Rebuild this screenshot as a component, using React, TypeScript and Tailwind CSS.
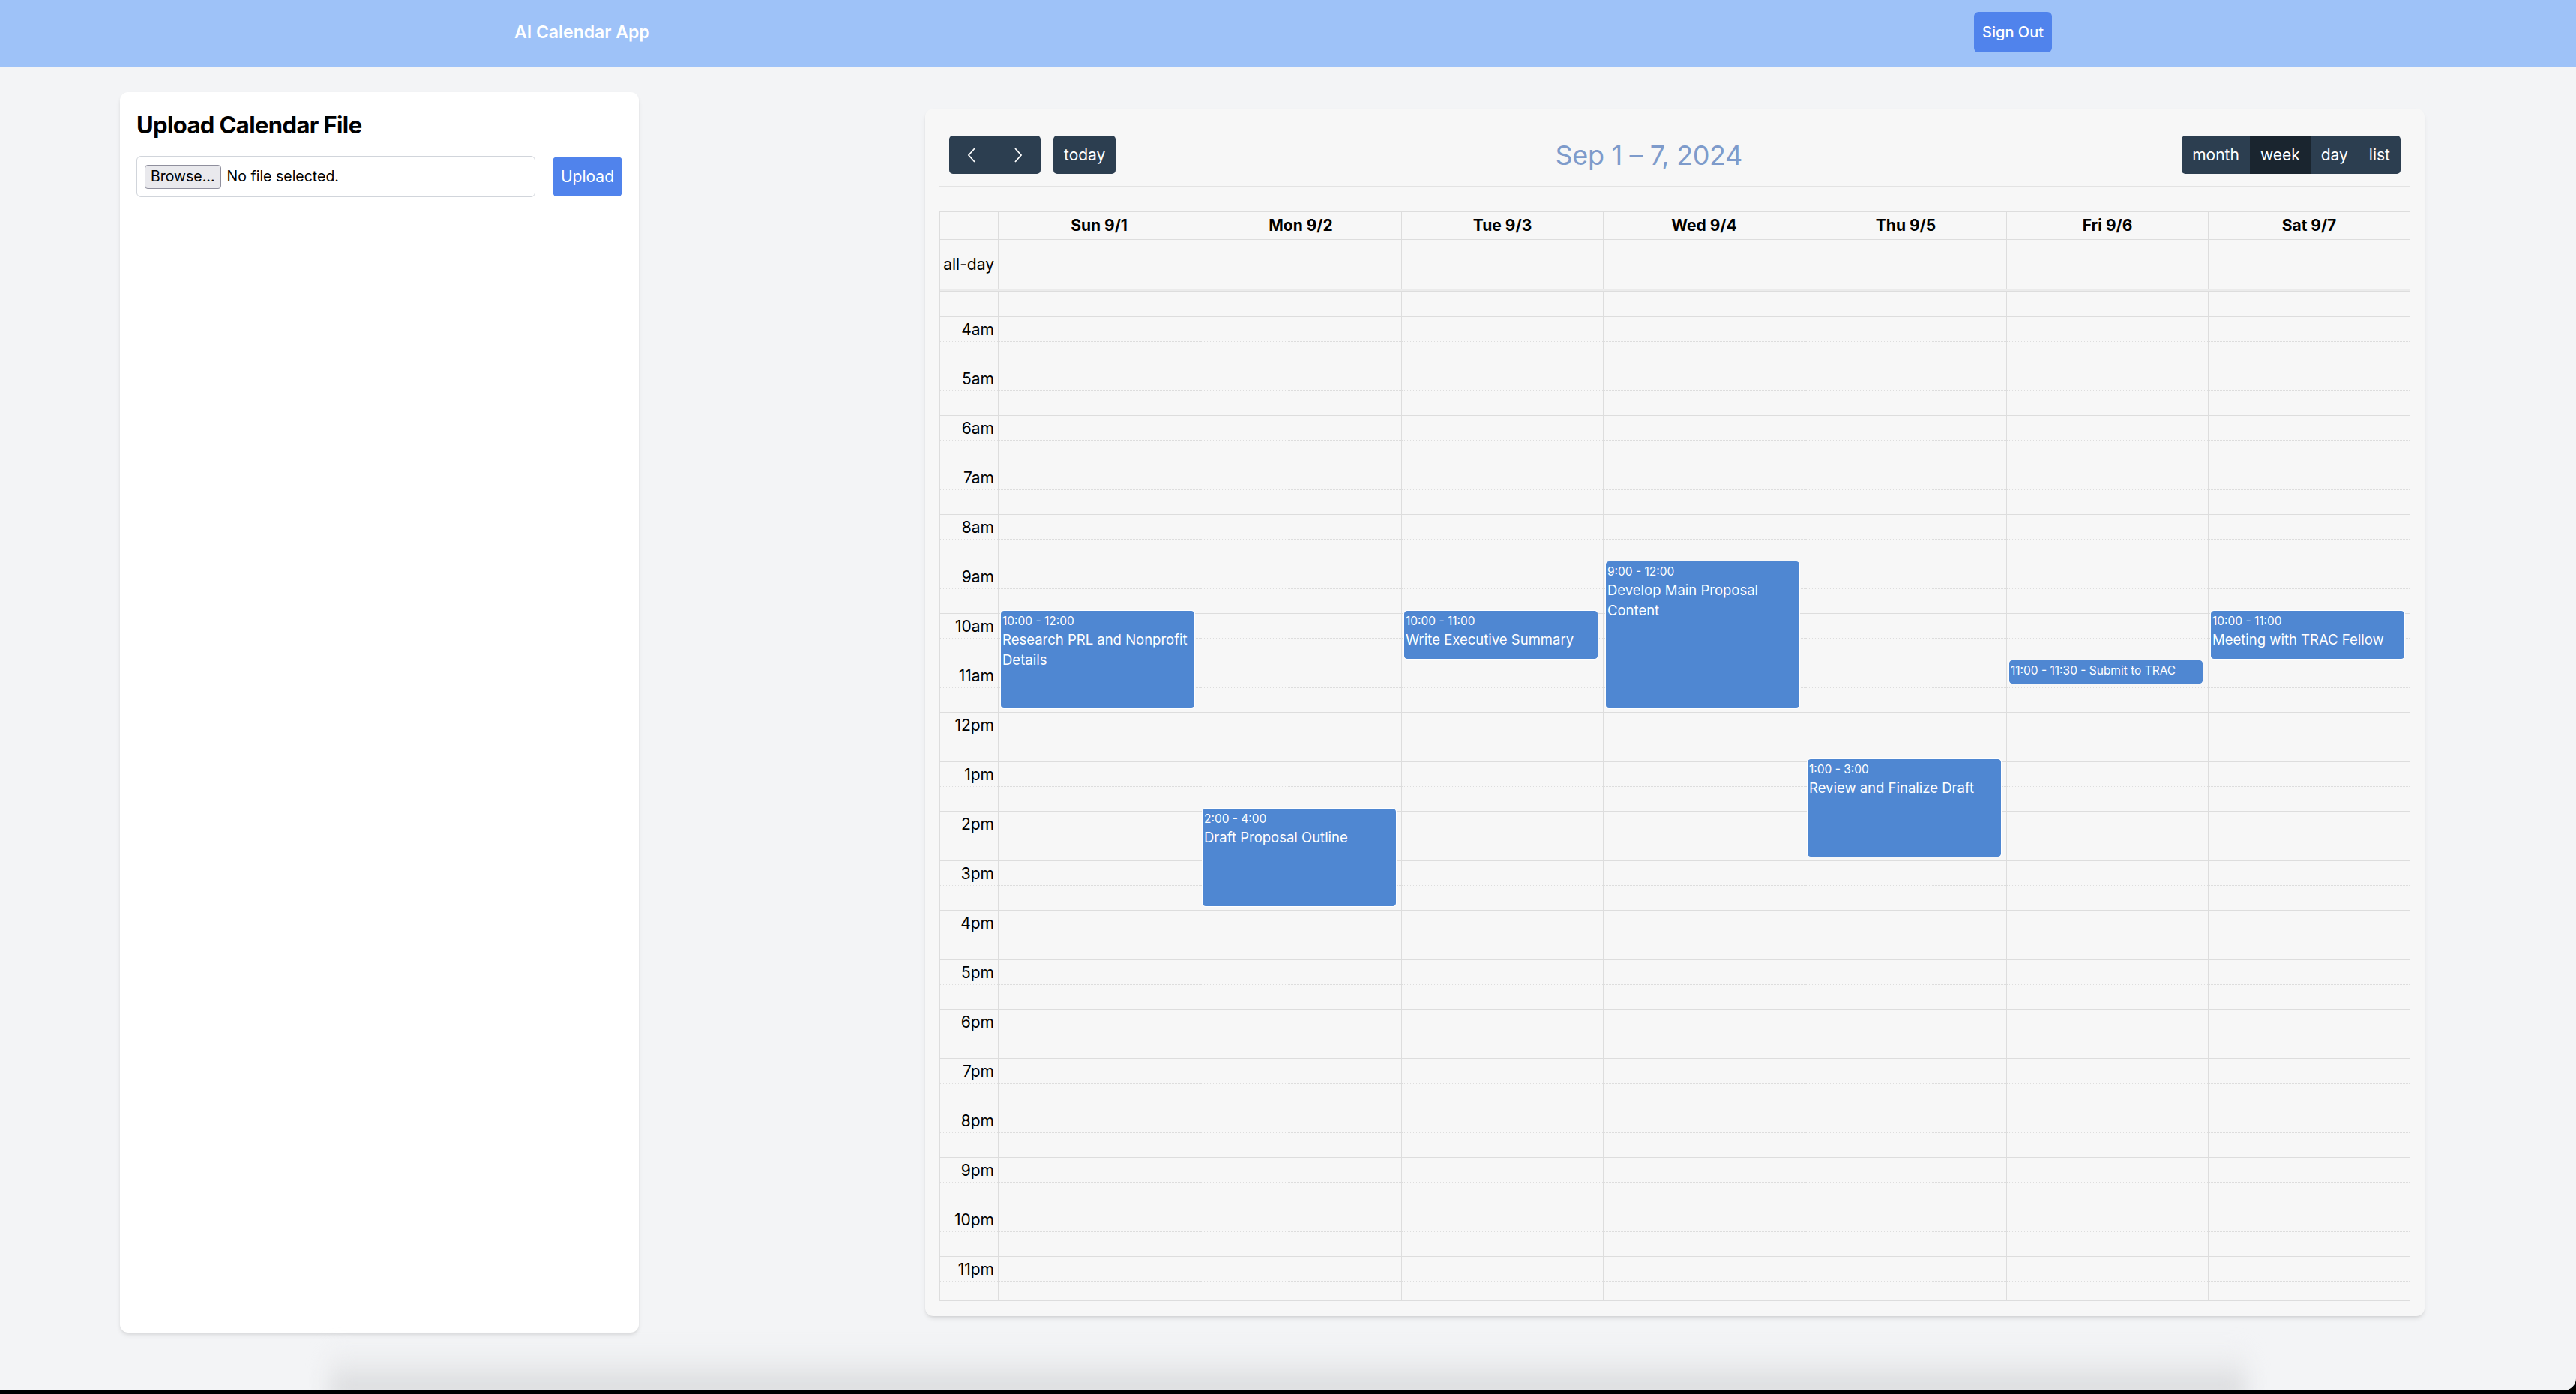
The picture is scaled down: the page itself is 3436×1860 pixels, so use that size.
import React from 'react';

type CalEvent = {
  day: number;
  start: number;
  end: number;
  time: string;
  title: string;
};

const DAYS = ['Sun 9/1', 'Mon 9/2', 'Tue 9/3', 'Wed 9/4', 'Thu 9/5', 'Fri 9/6', 'Sat 9/7'];

const HOURS = [
  '4am', '5am', '6am', '7am', '8am', '9am', '10am', '11am', '12pm', '1pm',
  '2pm', '3pm', '4pm', '5pm', '6pm', '7pm', '8pm', '9pm', '10pm', '11pm',
];

const EVENTS: CalEvent[] = [
  { day: 0, start: 10, end: 12, time: '10:00 - 12:00', title: 'Research PRL and Nonprofit Details' },
  { day: 1, start: 14, end: 16, time: '2:00 - 4:00', title: 'Draft Proposal Outline' },
  { day: 2, start: 10, end: 11, time: '10:00 - 11:00', title: 'Write Executive Summary' },
  { day: 3, start: 9, end: 12, time: '9:00 - 12:00', title: 'Develop Main Proposal Content' },
  { day: 4, start: 13, end: 15, time: '1:00 - 3:00', title: 'Review and Finalize Draft' },
  { day: 5, start: 11, end: 11.5, time: '11:00 - 11:30', title: 'Submit to TRAC' },
  { day: 6, start: 10, end: 11, time: '10:00 - 11:00', title: 'Meeting with TRAC Fellow' },
];

// one hour = two 33px slots, first visible slot is 3:30
const HOUR_PX = 66;
const TOP_PX = 33;

const Chevron = ({ dir }: { dir: 'left' | 'right' }) => (
  <svg width="33" height="22" viewBox="0 0 33 22" fill="none">
    <polyline
      points={dir === 'left' ? '20,2 12,11 20,20' : '13,2 21,11 13,20'}
      stroke="white"
      strokeWidth="1.8"
      strokeLinejoin="miter"
    />
  </svg>
);

const SlotRows = ({ labels }: { labels?: boolean }) => (
  <>
    <div className="h-[33px]" />
    {HOURS.map((h, i) => (
      <React.Fragment key={h}>
        <div className="h-[33px] border-t border-[#ddd] flex items-center justify-end pr-[5px] text-[21px] leading-none text-black">
          {labels ? h : null}
        </div>
        <div
          className={
            i === HOURS.length - 1
              ? 'h-[26px] border-t border-dotted border-[#ddd]'
              : 'h-[33px] border-t border-dotted border-[#ddd]'
          }
        />
      </React.Fragment>
    ))}
  </>
);

const EventBlock = ({ ev }: { ev: CalEvent }) => {
  const top = TOP_PX + (ev.start - 4) * HOUR_PX - 3;
  const height = (ev.end - ev.start) * HOUR_PX - 2;
  const short = ev.end - ev.start < 1;
  return (
    <div
      className="absolute left-[3px] right-[7px] rounded-[4px] bg-[#4f87d2] border border-[#4f87d2] shadow-[0_0_0_1px_#ffffff] px-[1px] pt-[1px] text-white overflow-hidden"
      style={{ top, height }}
    >
      {short ? (
        <div className="text-[15.5px] leading-[23px] whitespace-nowrap">
          {ev.time} - {ev.title}
        </div>
      ) : (
        <>
          <div className="text-[15.5px] leading-[23px]">{ev.time}</div>
          <div className="text-[18.5px] leading-[26.5px]">{ev.title}</div>
        </>
      )}
    </div>
  );
};

const ViewSwitch = () => {
  const views = ['month', 'week', 'day', 'list'];
  return (
    <div className="flex">
      {views.map((v, i) => (
        <button
          key={v}
          className={[
            'h-[51px] px-[14px] text-[21px] text-white',
            v === 'week' ? 'bg-[#1a252f]' : 'bg-[#2c3e50]',
            i === 0 ? 'rounded-l-[5px]' : '',
            i === views.length - 1 ? 'rounded-r-[5px]' : '',
          ].join(' ')}
        >
          {v}
        </button>
      ))}
    </div>
  );
};

const Calendar = () => (
  <div className="ml-[382px] mt-[22px] w-[2000px] bg-[#f7f7f7] rounded-[11px] shadow-md px-[19px] pt-[19px] pb-[20px]">
    <div className="flex items-center justify-between px-[13px] pt-[17px] pb-[16px] border-b border-[#e3e3e3]">
      <div className="flex items-center gap-[17px]">
        <div className="flex">
          <button className="h-[51px] px-[14px] flex items-center bg-[#2c3e50] rounded-l-[5px]">
            <Chevron dir="left" />
          </button>
          <button className="h-[51px] px-[14px] flex items-center bg-[#2c3e50] rounded-r-[5px]">
            <Chevron dir="right" />
          </button>
        </div>
        <button className="h-[51px] px-[14px] bg-[#2c3e50] rounded-[5px] text-[21px] text-white">today</button>
      </div>
      <h2 className="text-[36px] leading-none tracking-[-0.01em] text-[#7e9bcb]">Sep 1 – 7, 2024</h2>
      <ViewSwitch />
    </div>

    <div className="mt-[33px] border border-[#ddd]">
      <div className="grid grid-cols-[77px_repeat(7,minmax(0,1fr))] h-[37px] border-b border-[#ddd]">
        <div />
        {DAYS.map((d) => (
          <div key={d} className="border-l border-[#ddd] flex items-center justify-center text-[21px] font-bold text-black">
            {d}
          </div>
        ))}
      </div>
      <div className="grid grid-cols-[77px_repeat(7,minmax(0,1fr))] h-[65px]">
        <div className="flex items-center justify-end pr-[5px] text-[21px] text-black">all-day</div>
        {DAYS.map((d) => (
          <div key={d} className="border-l border-[#ddd]" />
        ))}
      </div>
      <div className="h-[4px] border-y border-[#ddd] bg-[#ebebeb]" />
      <div className="grid grid-cols-[77px_repeat(7,minmax(0,1fr))] h-[1346px] overflow-hidden">
        <div className="flex flex-col">
          <SlotRows labels />
        </div>
        {DAYS.map((d, di) => (
          <div key={d} className="relative flex flex-col border-l border-[#ddd]">
            <SlotRows />
            {EVENTS.filter((e) => e.day === di).map((e) => (
              <EventBlock key={e.title} ev={e} />
            ))}
          </div>
        ))}
      </div>
    </div>
  </div>
);

const UploadCard = () => (
  <div className="ml-[160px] w-[692px] h-[1655px] shrink-0 bg-white rounded-[11px] shadow-md p-[22px]">
    <h2 className="text-[31px] leading-[44px] font-bold tracking-[-0.02em] text-black mb-[19px]">
      Upload Calendar File
    </h2>
    <div className="flex items-center gap-[23px]">
      <div className="flex-1 h-[55px] border border-[#d1d5db] rounded-[6px] bg-white flex items-center px-[10px] gap-[8px]">
        <span className="h-[32px] px-[7px] flex items-center bg-[#e9e9ed] border border-[#8f8f9d] rounded-[4px] text-[19.5px] text-black">
          Browse...
        </span>
        <span className="text-[19.5px] text-black">No file selected.</span>
      </div>
      <button className="h-[53px] px-[11px] rounded-[6px] bg-[#5083ec] text-white text-[21px]">Upload</button>
    </div>
  </div>
);

export default function App() {
  return (
    <div className="h-[1860px] bg-black overflow-hidden [font-family:Inter,sans-serif]">
      <div className="h-[1855px] bg-[#f3f4f6] rounded-br-[16px] overflow-hidden flex flex-col">
        <header className="h-[90px] shrink-0 bg-[#9ec2f8] flex items-center pb-[4px]">
          <div className="ml-[686px] w-[2051px] flex items-center justify-between">
            <span className="text-[23px] font-semibold text-white">AI Calendar App</span>
            <button className="h-[54px] px-[11px] rounded-[6px] bg-[#5083ec] text-[20px] font-medium text-white">
              Sign Out
            </button>
          </div>
        </header>

        <main className="flex items-start pt-[33px] shrink-0">
          <UploadCard />
          <Calendar />
        </main>

        <div className="flex-1 flex items-end px-[440px]">
          <div className="h-[70px] w-full bg-linear-to-b from-transparent via-[#e6e7e9] to-[#d2d3d5] blur-[14px] translate-y-[12px]" />
        </div>
      </div>
    </div>
  );
}
